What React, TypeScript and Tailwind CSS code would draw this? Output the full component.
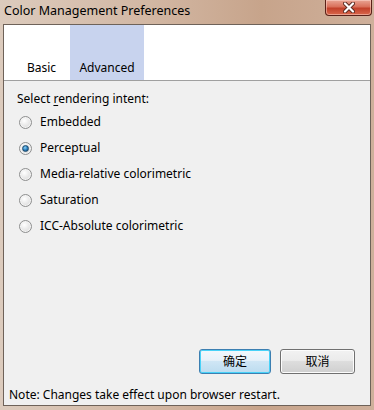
import { type FC } from 'react'

const OPTIONS = [
  { label: 'Embedded', checked: false },
  { label: 'Perceptual', checked: true },
  { label: 'Media-relative colorimetric', checked: false },
  { label: 'Saturation', checked: false },
  { label: 'ICC-Absolute colorimetric', checked: false },
]

const FONT = "font-['Noto_Sans','Noto_Sans_CJK_SC',sans-serif]"

const Radio: FC<{ checked: boolean }> = ({ checked }) => (
  <span className="flex h-[13px] w-[13px] items-center justify-center rounded-full border border-[#8e8f8f] bg-[radial-gradient(circle_at_40%_35%,#ffffff_0%,#e6e6e6_55%,#cfcfcf_100%)] shadow-[inset_0_0_0_1px_#f4f4f4]">
    {checked && (
      <span className="h-[7px] w-[7px] rounded-full border border-[#1d4a6b] bg-[radial-gradient(circle_at_40%_35%,#8fd3f5_0%,#2a7fbf_50%,#0f3f68_100%)]" />
    )}
  </span>
)

const DialogButton: FC<{ label: string; focused?: boolean }> = ({ label, focused }) => (
  <button
    className={
      focused
        ? 'flex h-[25px] w-[72px] items-center justify-center rounded-[3px] border border-[#3c7fb1] bg-[linear-gradient(#f2f8fc_0%,#e6f1f9_45%,#cfe6f5_50%,#bcdcef_100%)] text-[12px] text-black shadow-[inset_0_0_0_1px_#48d2f8]'
        : 'flex h-[25px] w-[75px] items-center justify-center rounded-[3px] border border-[#707070] bg-[linear-gradient(#f2f2f2_0%,#ebebeb_45%,#dddddd_50%,#cfcfcf_100%)] text-[12px] text-black shadow-[inset_0_0_0_1px_#fcfcfc]'
    }
  >
    {label}
  </button>
)

export default function App() {
  return (
    <div className={`flex h-[410px] w-[374px] flex-col bg-[linear-gradient(90deg,#dccbbd_0%,#d2b7a3_40%,#c7a48b_70%,#cfb09b_100%)] px-[3px] pb-[4px] ${FONT}`}>
      {/* Title bar */}
      <div className="flex h-[24px] items-start justify-between">
        <span className="pl-[1px] pt-[2px] text-[12.5px] leading-[17px] text-black">Color Management Preferences</span>
        <button className="mr-[-1px] flex h-[16px] w-[47px] items-center justify-center rounded-b-[4px] border border-t-0 border-[#5a2118] bg-[linear-gradient(#e9a594_0%,#d9705a_45%,#c2412a_55%,#d9674c_100%)] shadow-[inset_0_0_0_1px_rgba(255,220,210,0.5)]">
          <svg width="12" height="11" viewBox="0 0 12 11">
            <path d="M2 1.5 L10 9.5 M10 1.5 L2 9.5" stroke="#5a2a20" strokeWidth="4" strokeLinecap="round" />
            <path d="M2 1.5 L10 9.5 M10 1.5 L2 9.5" stroke="#ffffff" strokeWidth="2.2" strokeLinecap="round" />
          </svg>
        </button>
      </div>

      {/* Content */}
      <div className="flex flex-1 flex-col border border-[#6e6259] bg-[#f0f0f0]">
        <div className="flex h-[56px] items-end border-b border-[#a0a0a0] bg-white pl-[9px] text-[12px] text-black">
          <div className="flex h-full w-[57px] items-end justify-center pb-[3px]">Basic</div>
          <div className="flex h-full w-[74px] items-end justify-center bg-[#c8d3ee] pb-[3px]">Advanced</div>
        </div>

        <div className="flex flex-1 flex-col px-[13px] pt-[10px] text-[12px] text-black">
          <div className="leading-[16px]">
            Select <span className="underline underline-offset-2">r</span>endering intent:
          </div>
          <div className="mt-[7px] flex flex-col gap-[10px] pl-[2px]">
            {OPTIONS.map(o => (
              <label key={o.label} className="flex h-[16px] items-center gap-[8px]">
                <Radio checked={o.checked} />
                <span>{o.label}</span>
              </label>
            ))}
          </div>

          <div className="mt-auto flex justify-end gap-[9px] pr-[2px]">
            <DialogButton label="确定" focused />
            <DialogButton label="取消" />
          </div>
          <div className="mb-[2px] mt-[13px] ml-[-8px] leading-[16px]">Note: Changes take effect upon browser restart.</div>
        </div>
      </div>
    </div>
  )
}
